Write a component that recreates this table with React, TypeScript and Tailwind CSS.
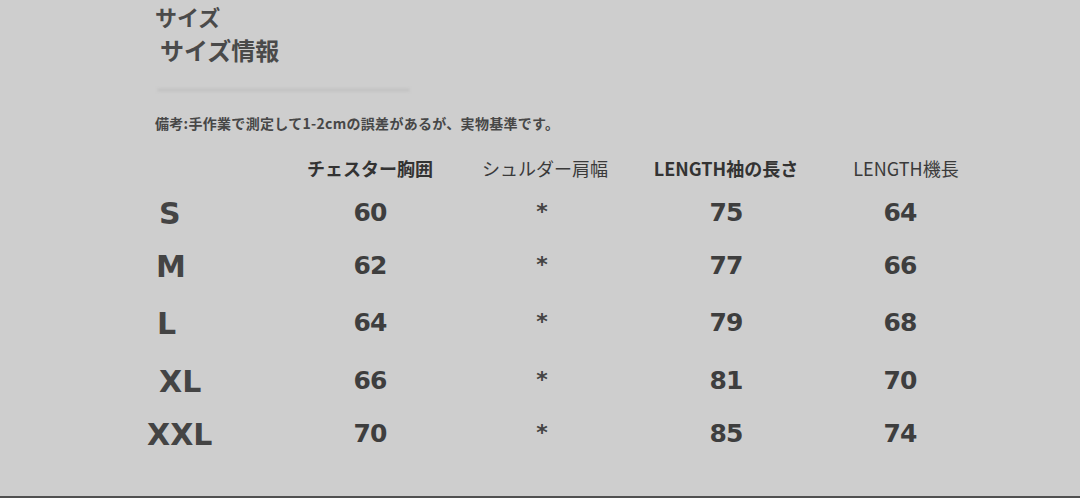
import React from "react";

const rows = [
  { size: "S", pad: "pl-[19px]", h: "h-[54px]", v: ["60", "*", "75", "64"] },
  { size: "M", pad: "pl-[16px]", h: "h-[52px]", v: ["62", "*", "77", "66"] },
  { size: "L", pad: "pl-[17px]", h: "h-[62px]", v: ["64", "*", "79", "68"] },
  { size: "XL", pad: "pl-[19px]", h: "h-[54px]", v: ["66", "*", "81", "70"] },
  { size: "XXL", pad: "pl-[7px]", h: "h-[52px]", v: ["70", "*", "85", "74"] },
];

export default function App() {
  return (
    <div className="w-[1080px] h-[498px] bg-[#cecece] border-b-2 border-[#505050] box-border overflow-hidden text-[#3e3e3e] font-['Noto_Sans_CJK_JP','Noto_Sans',sans-serif]">
      <div className="pl-[140px] pt-[2px] flex flex-col">
        <div className="pl-[15px] text-[22px] leading-[28px] font-bold text-[#4a4a4a]">
          サイズ
        </div>
        <div className="pl-[20px] mt-[4px] text-[24px] leading-[32px] font-bold text-[#4a4a4a]">
          サイズ情報
        </div>
        <div className="ml-[17px] mt-[22px] h-[4px] w-[253px] rounded-full bg-[#c4c4c4] blur-[1px]" />
        <div className="pl-[15px] mt-[21px] text-[14px] leading-[20px] font-bold text-[#474747] tracking-[0.3px]">
          備考:手作業で測定して1-2cmの誤差があるが、実物基準です。
        </div>
        <div className="mt-[17px] grid grid-cols-[150px_160px_184px_184px_164px]">
          <div className="h-[36px]" />
          <div className="h-[36px] flex items-center justify-center text-[18px] font-bold text-[#333]">
            チェスター胸囲
          </div>
          <div className="h-[36px] flex items-center justify-center pl-[6px] text-[18px] font-normal text-[#3a3a3a]">
            シュルダー肩幅
          </div>
          <div className="h-[36px] flex items-center justify-center text-[18px] font-bold text-[#333]">
            LENGTH袖の長さ
          </div>
          <div className="h-[36px] flex items-center justify-center pl-[12px] text-[18px] font-normal text-[#3a3a3a]">
            LENGTH機長
          </div>
          {rows.map((r) => (
            <React.Fragment key={r.size}>
              <div
                className={`${r.h} flex items-center ${r.pad} font-['DejaVu_Sans',sans-serif] text-[30px] font-bold text-[#444]`}
              >
                {r.size}
              </div>
              {r.v.map((val, i) =>
                val === "*" ? (
                  <div
                    key={i}
                    className={`${r.h} flex items-center justify-center font-['DejaVu_Sans',sans-serif] text-[22px] font-bold text-[#444]`}
                  >
                    <span className="-translate-y-[2px]">*</span>
                  </div>
                ) : (
                  <div
                    key={i}
                    className={`${r.h} flex items-center justify-center font-['DejaVu_Sans',sans-serif] text-[25px] font-bold tracking-[-1px] text-[#3e3e3e]`}
                  >
                    {val}
                  </div>
                )
              )}
            </React.Fragment>
          ))}
        </div>
      </div>
    </div>
  );
}
